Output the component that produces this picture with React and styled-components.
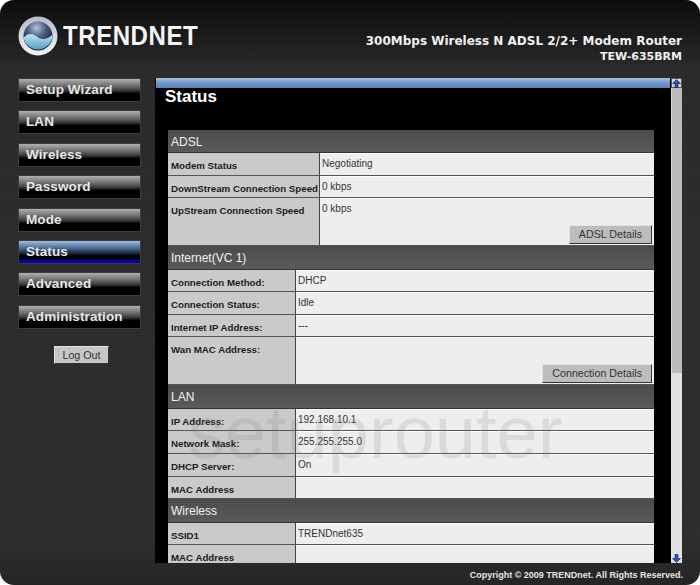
import React from 'react';
import styled, { createGlobalStyle } from 'styled-components';

const GlobalStyle = createGlobalStyle`
  html, body {
    margin: 0;
    padding: 0;
    background: #fff;
  }
  body {
    font-family: 'Liberation Sans', Arial, sans-serif;
  }
`;

const Page = styled.div`
  position: relative;
  width: 700px;
  height: 585px;
  overflow: hidden;
  border-radius: 14px;
  display: flex;
  flex-direction: column;
  background:
    repeating-linear-gradient(0deg, rgba(0, 0, 0, 0.07) 0 1px, transparent 1px 3px),
    linear-gradient(180deg, #0c0c0c 0, #2c2c2c 70px, #2f2f2f 540px, #262626 585px);
`;

const Header = styled.header`
  height: 78px;
  flex: none;
  display: flex;
  align-items: flex-start;
  justify-content: space-between;
  padding: 16px 18px 0 18px;
  box-sizing: border-box;
`;

const Logo = styled.div`
  display: flex;
  align-items: center;
  gap: 5px;
`;

const LogoText = styled.span`
  display: inline-block;
  font-family: 'Liberation Sans', Arial, sans-serif;
  font-weight: 700;
  font-size: 28px;
  line-height: 40px;
  letter-spacing: 0.6px;
  color: #f4f4f4;
  transform: scaleX(0.86);
  transform-origin: left center;
`;

const Product = styled.div`
  padding-top: 18px;
  text-align: right;
  color: #f0f0f0;
  font-family: 'DejaVu Sans', sans-serif;
  font-weight: 700;
`;

const ProductName = styled.div`
  font-size: 12px;
  line-height: 15px;
`;

const ProductModel = styled.div`
  font-size: 11px;
  line-height: 15px;
`;

const Body = styled.div`
  flex: 1;
  min-height: 0;
  display: flex;
`;

const Sidebar = styled.nav`
  width: 155px;
  flex: none;
  box-sizing: border-box;
  padding-left: 18px;
  display: flex;
  flex-direction: column;
`;

const NavButton = styled.div`
  width: 123px;
  height: 24px;
  margin-bottom: 8.4px;
  box-sizing: border-box;
  border: 1px solid #3c3c3c;
  padding-left: 7px;
  font-family: 'Liberation Sans', Arial, sans-serif;
  font-size: 13.5px;
  font-weight: 700;
  letter-spacing: 0.1px;
  line-height: 22px;
  color: #e8e8e8;
  background: ${(p) =>
    p.$active
      ? 'linear-gradient(180deg, #9fbbe0 0, #5f7fa8 25%, #1c2a44 55%, #000 68%, #000 80%, #0606b8 90%, #0000a0 100%)'
      : 'linear-gradient(180deg, #b0b0b0 0, #7c7c7c 25%, #3a3a3a 52%, #000 66%, #000 100%)'};
`;

const LogOut = styled.div`
  align-self: flex-start;
  margin: 9px 0 0 36px;
  width: 55px;
  height: 18px;
  box-sizing: border-box;
  background: #c6c6c6;
  border-top: 1px solid #e4e4e4;
  border-left: 1px solid #e4e4e4;
  border-right: 1px solid #333;
  border-bottom: 1px solid #333;
  color: #333;
  font-size: 10.7px;
  line-height: 16px;
  text-align: center;
`;

const Frame = styled.main`
  width: 516px;
  height: 485px;
  flex: none;
  background: #000;
  overflow: hidden;
  display: flex;
  flex-direction: column;
`;

const TitleBar = styled.div`
  height: 10px;
  flex: none;
  margin: 0 1px;
  background: linear-gradient(180deg, #a9c2e4 0, #7499cf 45%, #5c7fb4 100%);
`;

const Title = styled.h1`
  margin: 0;
  padding: 0 0 0 10px;
  height: 42px;
  flex: none;
  font-size: 17px;
  line-height: 18px;
  font-weight: 700;
  color: #fff;
`;

const Table = styled.div`
  width: 486px;
  margin-left: 13px;
  flex: none;
`;

const SectionHead = styled.div`
  height: ${(p) => p.$h}px;
  box-sizing: border-box;
  padding-left: 3px;
  background: linear-gradient(180deg, #4c4c4c, #5a5a5a);
  border-bottom: 1px solid #333;
  color: #f2f2f2;
  font-size: 12px;
  line-height: 24px;
`;

const Row = styled.div`
  display: grid;
  grid-template-columns: ${(p) => p.$label}px 1fr;
  height: ${(p) => p.$h}px;
  box-sizing: border-box;
  border-bottom: 1px solid #555;
`;

const Label = styled.div`
  background: #cacaca;
  border-right: 1px solid #444;
  padding: 6px 0 0 3px;
  font-size: 9.7px;
  font-weight: 700;
  line-height: 13px;
  color: #1c1c1c;
  white-space: nowrap;
  overflow: hidden;
`;

const Value = styled.div`
  background: #eeeeee;
  border-top: 1px solid #fff;
  padding: 3px 0 0 2px;
  font-size: 10px;
  line-height: 13px;
  color: #333;
  display: flex;
  flex-direction: column;
`;

const DetailsButton = styled.div`
  align-self: flex-end;
  margin: auto 2px 1px 0;
  height: 19px;
  box-sizing: border-box;
  padding: 0 9px;
  background: #bdbdbd;
  border-top: 1px solid #e2e2e2;
  border-left: 1px solid #e2e2e2;
  border-right: 1px solid #333;
  border-bottom: 1px solid #333;
  color: #333;
  font-size: 10.7px;
  line-height: 17px;
`;

const Scrollbar = styled.div`
  width: 11px;
  height: 485px;
  flex: none;
  background: #e2e2e2;
  display: flex;
  flex-direction: column;
`;

const ScrollArrow = styled.div`
  height: 10px;
  flex: none;
  display: flex;
  align-items: center;
  justify-content: center;
  background: ${(p) => (p.$boxed ? '#d8d8d8' : '#e2e2e2')};
  box-shadow: ${(p) => (p.$boxed ? 'inset 0 0 0 1px #555' : 'none')};
`;

const ScrollThumb = styled.div`
  height: 285px;
  flex: none;
  background: #bcbcbc;
  border-left: 1px solid #d8d8d8;
`;

const ScrollTrack = styled.div`
  flex: 1;
`;

const Footer = styled.footer`
  height: 22px;
  flex: none;
  box-sizing: border-box;
  padding: 5px 17px 0 0;
  text-align: right;
  font-size: 9px;
  font-weight: 700;
  line-height: 14px;
  color: #e6e6e6;
`;

const Watermark = styled.div`
  position: absolute;
  left: 188px;
  top: 393px;
  font-family: 'Liberation Sans', Arial, sans-serif;
  font-size: 74px;
  line-height: 80px;
  color: rgba(120, 120, 120, 0.16);
  pointer-events: none;
  white-space: nowrap;
`;

const LogoMark = () => (
  <svg width="40" height="40" viewBox="0 0 40 40">
    <defs>
      <linearGradient id="ring" x1="0" y1="0" x2="0" y2="1">
        <stop offset="0" stopColor="#b8bcc4" />
        <stop offset="1" stopColor="#f2f4f6" />
      </linearGradient>
      <radialGradient id="ball" cx="0.45" cy="0.22" r="0.7">
        <stop offset="0" stopColor="#b4c2d8" />
        <stop offset="0.45" stopColor="#4c5f82" />
        <stop offset="1" stopColor="#0e1a30" />
      </radialGradient>
      <linearGradient id="wave" x1="0" y1="0" x2="0" y2="1">
        <stop offset="0" stopColor="#c4e6f2" />
        <stop offset="1" stopColor="#4f9ec4" />
      </linearGradient>
    </defs>
    <circle cx="20" cy="20" r="19.5" fill="url(#ring)" />
    <circle cx="20" cy="20" r="14.5" fill="url(#ball)" />
    <path d="M5.6 21.5 C10 17 14 17 18 20 C23 24 28 24 34.4 19 A14.5 14.5 0 0 1 5.6 21.5 Z" fill="url(#wave)" />
  </svg>
);

const Arrow = ({ down }) => (
  <svg width="9" height="9" viewBox="0 0 9 9">
    <path
      d={down ? 'M3 0.5H6V4.5H8.5L4.5 8.5L0.5 4.5H3Z' : 'M3 8.5H6V4.5H8.5L4.5 0.5L0.5 4.5H3Z'}
      fill="#2a55b8"
      stroke="#0c1c50"
      strokeWidth="0.6"
    />
  </svg>
);

const NAV = ['Setup Wizard', 'LAN', 'Wireless', 'Password', 'Mode', 'Status', 'Advanced', 'Administration'];

const SECTIONS = [
  {
    title: 'ADSL',
    label: 152,
    headH: 23,
    rows: [
      { h: 23, name: 'Modem Status', value: 'Negotiating' },
      { h: 22, name: 'DownStream Connection Speed', value: '0 kbps' },
      { h: 48, name: 'UpStream Connection Speed', value: '0 kbps', button: 'ADSL Details' },
    ],
  },
  {
    title: 'Internet(VC 1)',
    label: 128,
    headH: 24,
    rows: [
      { h: 22, name: 'Connection Method:', value: 'DHCP' },
      { h: 23, name: 'Connection Status:', value: 'Idle' },
      { h: 22, name: 'Internet IP Address:', value: '---' },
      { h: 48, name: 'Wan MAC Address:', value: '', button: 'Connection Details' },
    ],
  },
  {
    title: 'LAN',
    label: 128,
    headH: 24,
    rows: [
      { h: 22, name: 'IP Address:', value: '192.168.10.1' },
      { h: 23, name: 'Network Mask:', value: '255.255.255.0' },
      { h: 23, name: 'DHCP Server:', value: 'On' },
      { h: 22, name: 'MAC Address', value: '' },
    ],
  },
  {
    title: 'Wireless',
    label: 128,
    headH: 24,
    rows: [
      { h: 22, name: 'SSID1', value: 'TRENDnet635' },
      { h: 23, name: 'MAC Address', value: '' },
    ],
  },
];

export default function App() {
  return (
    <>
      <GlobalStyle />
      <Page>
        <Header>
          <Logo>
            <LogoMark />
            <LogoText>TRENDNET</LogoText>
          </Logo>
          <Product>
            <ProductName>300Mbps Wireless N ADSL 2/2+ Modem Router</ProductName>
            <ProductModel>TEW-635BRM</ProductModel>
          </Product>
        </Header>
        <Body>
          <Sidebar>
            {NAV.map((item) => (
              <NavButton key={item} $active={item === 'Status'}>
                {item}
              </NavButton>
            ))}
            <LogOut>Log Out</LogOut>
          </Sidebar>
          <Frame>
            <TitleBar />
            <Title>Status</Title>
            <Table>
              {SECTIONS.map((section) => (
                <section key={section.title}>
                  <SectionHead $h={section.headH}>{section.title}</SectionHead>
                  {section.rows.map((row) => (
                    <Row key={row.name} $label={section.label} $h={row.h}>
                      <Label>{row.name}</Label>
                      <Value>
                        {row.value}
                        {row.button && <DetailsButton>{row.button}</DetailsButton>}
                      </Value>
                    </Row>
                  ))}
                </section>
              ))}
            </Table>
          </Frame>
          <Scrollbar>
            <ScrollArrow $boxed>
              <Arrow />
            </ScrollArrow>
            <ScrollThumb />
            <ScrollTrack />
            <ScrollArrow>
              <Arrow down />
            </ScrollArrow>
          </Scrollbar>
        </Body>
        <Footer>Copyright © 2009 TRENDnet. All Rights Reserved.</Footer>
        <Watermark>setuprouter</Watermark>
      </Page>
    </>
  );
}
